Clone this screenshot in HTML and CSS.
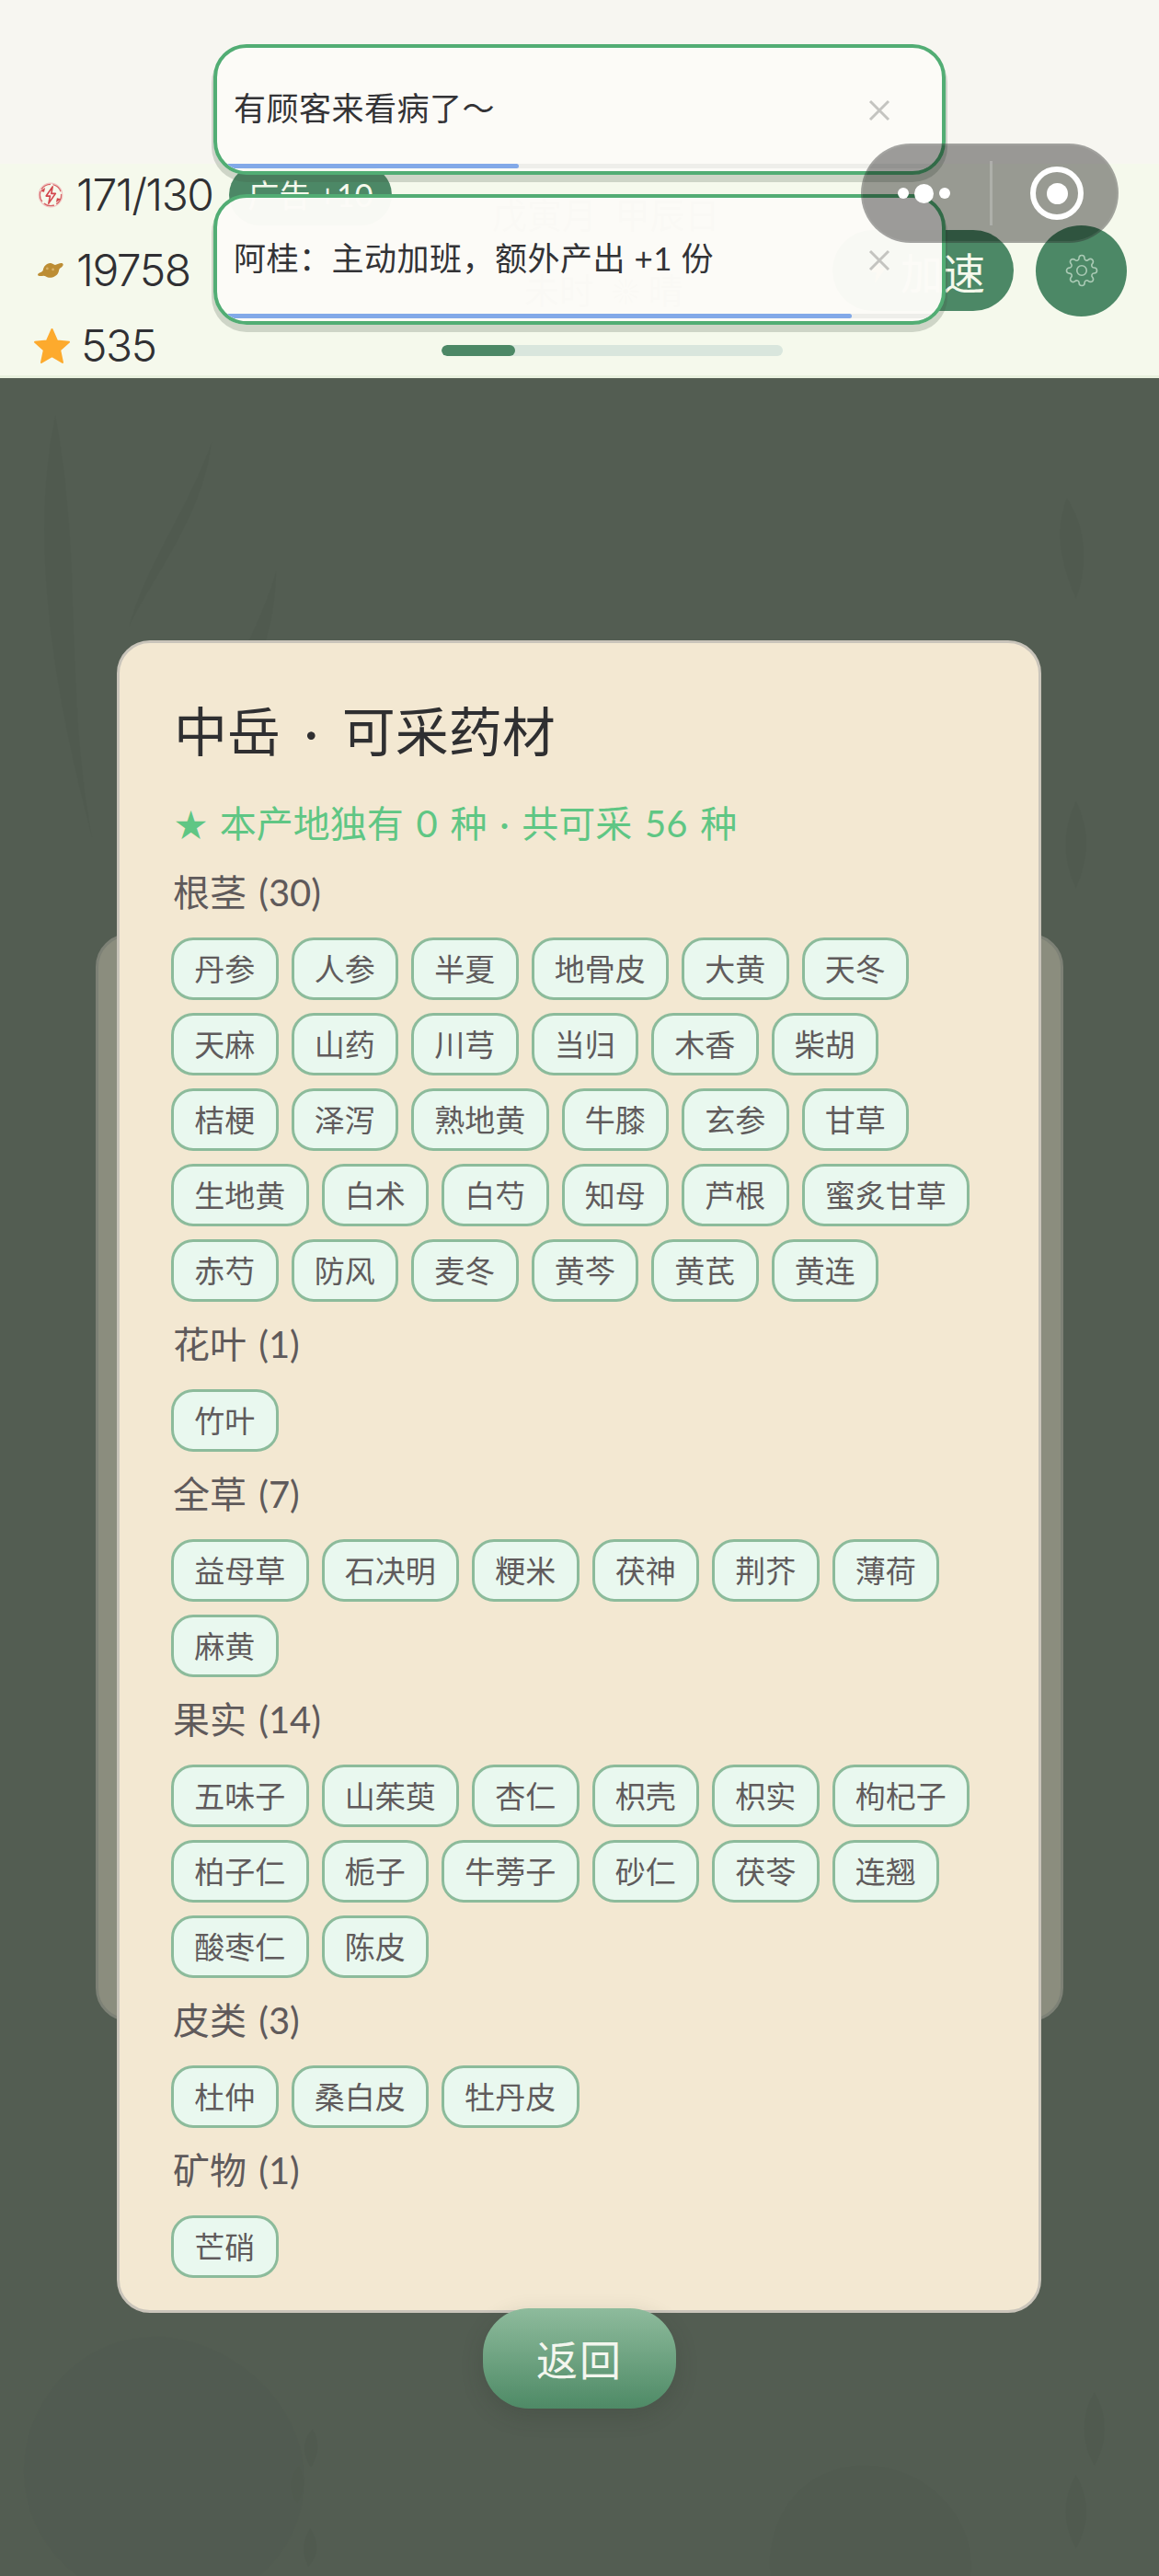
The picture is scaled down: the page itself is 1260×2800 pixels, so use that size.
FILE: index.html
```html
<!DOCTYPE html>
<html lang="zh-CN">
<head>
  <meta charset="UTF-8" />
  <title>中岳 · 可采药材</title>
  <link rel="stylesheet" href="styles.css">
</head>
<body>

  <div class="status-bar"></div>

  <header class="hud">
    <div class="stats">
      <div class="stat">
        <svg class="stat-icon" viewBox="0 0 28 26" fill="none">
          <circle cx="14" cy="13" r="11" stroke="#d9686a" stroke-width="1.6" stroke-dasharray="11 2.5"/>
          <circle cx="14" cy="13" r="12" stroke="#f0c4c2" stroke-width="1"/>
          <path d="M16 4.500 9.500 14h4l-1.500 7.500L19 11.500h-4.200z" fill="#f8ecea" stroke="#d2474c" stroke-width="1.500" stroke-linejoin="round"/>
          <path d="M3.500 9 8.500 5.500 7.500 10zM24.500 17 19.500 20.500 20.500 16z" fill="#d2474c"/>
        </svg>
        <span class="stat-num">171/130</span>
      </div>
      <div class="stat">
        <svg class="stat-icon" viewBox="0 0 29 22">
          <path d="M1 15.500C1.500 13 5 13.500 6.500 11 7 6.500 11 2.500 15.500 3.500c2 .5 3 2 4.500 1.500 2-1 5-2.500 7-1.500 2 1.500-.5 4-2.500 5-1.500 1-1 3-2 5-1.500 3.500-6 5.500-10 5-2.500-.5-3.500-2-5.500-2-2.500.3-6.500.5-6-1.500z" fill="#bc8d34"/>
          <circle cx="11" cy="9" r="1.300" fill="#d8b26a"/>
          <circle cx="17" cy="10" r="1.300" fill="#d8b26a"/>
        </svg>
        <span class="stat-num">19758</span>
      </div>
      <div class="stat">
        <svg class="star-icon" viewBox="0 0 41 40">
          <path d="M20.500 2 26 14.500l13 1.300-9.800 8.800L32 38l-11.500-6.800L9 38l2.800-13.400L2 15.800l13-1.300z" fill="#fdaa2d" stroke="#fdaa2d" stroke-width="2" stroke-linejoin="round"/>
        </svg>
        <span class="stat-num">535</span>
      </div>
    </div>

    <div class="mid">
      <div class="mid-top">
        <div class="ad-pill">广告 +10</div>
        <div class="clock">
          <div class="clock-date">戊寅月&nbsp;&nbsp;甲辰日</div>
          <div class="clock-time">未时&nbsp;&nbsp;☀&nbsp;晴</div>
        </div>
      </div>
      <div class="loader"><div class="loader-fill"></div></div>
    </div>

    <div class="actions">
      <div class="speed-btn">
        <svg class="bolt" viewBox="0 0 20 30"><path d="M12 1 2 17h6l-2 12 12-17h-7z" fill="#f6d36b"/></svg>
        <span>加速</span>
      </div>
      <div class="gear-btn">
        <svg viewBox="0 0 24 24" fill="none" stroke="#a9c9b4" stroke-width="1.100">
          <circle cx="12" cy="12" r="3.500"/>
          <path d="M19.400 15a1.650 1.650 0 0 0 .33 1.820l.06.06a2 2 0 0 1 0 2.830 2 2 0 0 1-2.830 0l-.06-.06a1.650 1.650 0 0 0-1.820-.33 1.650 1.650 0 0 0-1 1.510V21a2 2 0 0 1-2 2 2 2 0 0 1-2-2v-.09A1.650 1.650 0 0 0 9 19.400a1.650 1.650 0 0 0-1.820.33l-.06.06a2 2 0 0 1-2.830 0 2 2 0 0 1 0-2.830l.06-.06a1.650 1.650 0 0 0 .33-1.820 1.650 1.650 0 0 0-1.510-1H3a2 2 0 0 1-2-2 2 2 0 0 1 2-2h.09A1.650 1.650 0 0 0 4.600 9a1.650 1.650 0 0 0-.33-1.820l-.06-.06a2 2 0 0 1 0-2.830 2 2 0 0 1 2.830 0l.06.06a1.650 1.650 0 0 0 1.820.33H9a1.650 1.650 0 0 0 1-1.510V3a2 2 0 0 1 2-2 2 2 0 0 1 2 2v.09a1.650 1.650 0 0 0 1 1.510 1.650 1.650 0 0 0 1.820-.33l.06-.06a2 2 0 0 1 2.830 0 2 2 0 0 1 0 2.830l-.06.06a1.650 1.650 0 0 0-.33 1.820V9a1.650 1.650 0 0 0 1.510 1H21a2 2 0 0 1 2 2 2 2 0 0 1-2 2h-.09a1.650 1.650 0 0 0-1.510 1z"/>
        </svg>
      </div>
    </div>
  </header>

  <!-- 顶部通知 -->
  <div class="toast toast-first">
    <span class="toast-text">有顾客来看病了～</span>
    <svg class="toast-close" viewBox="0 0 24 24"><path d="M2 2 22 22M22 2 2 22" stroke="#c4c4c0" stroke-width="3"/></svg>
    <div class="toast-track"><div class="toast-bar" style="width: 41.6%"></div></div>
  </div>
  <div class="toast toast-second">
    <span class="toast-text">阿桂：主动加班，额外产出 +1 份</span>
    <svg class="toast-close" viewBox="0 0 24 24"><path d="M2 2 22 22M22 2 2 22" stroke="#c4c4c0" stroke-width="3"/></svg>
    <div class="toast-track"><div class="toast-bar" style="width: 87.5%"></div></div>
  </div>

  <!-- 小程序胶囊 -->
  <div class="capsule">
    <div class="capsule-dots"><i></i><i class="big"></i><i></i></div>
    <div class="capsule-line"></div>
    <div class="capsule-target"><i></i></div>
  </div>

  <main class="scene">
    <svg class="scene-art" viewBox="0 0 1260 2390" fill="#3f4a3f">
      <path d="M60 40c30 160 10 300 40 460-40-150-70-320-40-460zM230 70c-30 80-70 130-90 200 30-60 80-120 90-200zM300 210c-20 70-60 120-70 190 40-50 70-120 70-190zM240 300c40 5 80 30 110 60-40-15-80-25-110-60z"/>
      <path d="M1160 130c20 30 25 70 10 110-15-35-25-70-10-110zM1045 330c20 20 25 50 15 80-15-25-25-50-15-80zM1050 430c15 30 15 65-5 95-10-30-10-65 5-95zM1170 460c15 30 15 60 0 95-15-30-15-65 0-95z"/>
      <path d="M180 2130c90 10 160 90 150 170-10 90-100 140-180 120-90-20-140-100-120-180 20-70 80-115 150-110z" opacity=".5"/>
      <path d="M340 2230c8 15 6 30-2 42-10-14-10-30 2-42zM325 2270c8 15 6 30-2 42-10-14-10-30 2-42zM335 2380c-8-15-6-30 2-42 10 14 10 30-2 42z"/>
      <path d="M940 2270c70 0 125 60 115 125-10 70-70 100-130 85-60-15-100-70-85-130 12-50 50-80 100-80z" opacity=".6"/>
      <path d="M720 2620c35-35 70-50 110-70-20 45-60 80-90 100z" opacity=".6"/>
      <path d="M1190 2190c15 25 15 55 0 80-15-25-15-55 0-80zM1170 2280c15 25 15 55 0 80-15-25-15-55 0-80z"/>
    </svg>

    <div class="back-card"></div>

    <section class="sheet">
      <h1 class="sheet-title">中岳 · 可采药材</h1>
      <p class="sheet-sub"><span class="sub-star">★</span> 本产地独有 0 种 · 共可采 56 种</p>

      <h2 class="group-name">根茎 (30)</h2>
      <div class="tags">
        <span class="tag">丹参</span><span class="tag">人参</span><span class="tag">半夏</span><span class="tag">地骨皮</span><span class="tag">大黄</span><span class="tag">天冬</span>
        <span class="tag">天麻</span><span class="tag">山药</span><span class="tag">川芎</span><span class="tag">当归</span><span class="tag">木香</span><span class="tag">柴胡</span>
        <span class="tag">桔梗</span><span class="tag">泽泻</span><span class="tag">熟地黄</span><span class="tag">牛膝</span><span class="tag">玄参</span><span class="tag">甘草</span>
        <span class="tag">生地黄</span><span class="tag">白术</span><span class="tag">白芍</span><span class="tag">知母</span><span class="tag">芦根</span><span class="tag">蜜炙甘草</span>
        <span class="tag">赤芍</span><span class="tag">防风</span><span class="tag">麦冬</span><span class="tag">黄芩</span><span class="tag">黄芪</span><span class="tag">黄连</span>
      </div>

      <h2 class="group-name">花叶 (1)</h2>
      <div class="tags">
        <span class="tag">竹叶</span>
      </div>

      <h2 class="group-name">全草 (7)</h2>
      <div class="tags">
        <span class="tag">益母草</span><span class="tag">石决明</span><span class="tag">粳米</span><span class="tag">茯神</span><span class="tag">荆芥</span><span class="tag">薄荷</span>
        <span class="tag">麻黄</span>
      </div>

      <h2 class="group-name">果实 (14)</h2>
      <div class="tags">
        <span class="tag">五味子</span><span class="tag">山茱萸</span><span class="tag">杏仁</span><span class="tag">枳壳</span><span class="tag">枳实</span><span class="tag">枸杞子</span>
        <span class="tag">柏子仁</span><span class="tag">栀子</span><span class="tag">牛蒡子</span><span class="tag">砂仁</span><span class="tag">茯苓</span><span class="tag">连翘</span>
        <span class="tag">酸枣仁</span><span class="tag">陈皮</span>
      </div>

      <h2 class="group-name">皮类 (3)</h2>
      <div class="tags">
        <span class="tag">杜仲</span><span class="tag">桑白皮</span><span class="tag">牡丹皮</span>
      </div>

      <h2 class="group-name">矿物 (1)</h2>
      <div class="tags">
        <span class="tag">芒硝</span>
      </div>
    </section>

    <button class="back-btn">返回</button>
  </main>

</body>
</html>
```

FILE: styles.css
```css
* {
  box-sizing: border-box;
}

body {
  margin: 0;
  width: 1260px;
  height: 2800px;
  overflow: hidden;
  position: relative;
  background-color: #535d52;
  font-family: "Lato", "Noto Sans CJK SC", sans-serif;
  color: #303033;
}

/* 顶部 */
.status-bar {
  height: 178px;
  background-color: #f7f6f1;
}

.hud {
  display: flex;
  height: 233px;
  background-color: #f5f9ec;
  border-bottom: 3px solid #e9f1df;
}

.stats {
  width: 249px;
  padding: 1px 0 0 36px;
  display: flex;
  flex-direction: column;
  gap: 17px;
}

.stat {
  height: 66px;
  display: flex;
  align-items: center;
}

.stat-icon {
  flex-shrink: 0;
  width: 30px;
  height: 28px;
  margin: 0 13px 0 4px;
}

.star-icon {
  flex-shrink: 0;
  width: 41px;
  height: 40px;
  margin-right: 11px;
}

.stat-num {
  font-family: "Inter", sans-serif;
  font-size: 48px;
  font-weight: 300;
  letter-spacing: -1.5px;
  white-space: nowrap;
}

.mid {
  width: 656px;
  padding-top: 1px;
}

.mid-top {
  display: flex;
}

.ad-pill {
  width: 177px;
  height: 66px;
  border-radius: 33px;
  background-color: #4c8866;
  color: #f5f9ec;
  font-size: 34px;
  line-height: 66px;
  text-align: center;
  white-space: nowrap;
}

.clock {
  margin-left: 109px;
  padding-top: 32px;
  font-size: 38px;
  line-height: 44px;
  color: #8a8a85;
  white-space: nowrap;
}

.clock-time {
  margin: 38px 0 0 35px;
}

.loader {
  width: 371px;
  height: 12px;
  margin: 38px 0 0 231px;
  border-radius: 6px;
  background-color: #d9e6dd;
  overflow: hidden;
}

.loader-fill {
  width: 80px;
  height: 100%;
  border-radius: 6px;
  background-color: #4c8866;
}

.actions {
  display: flex;
  align-items: center;
  gap: 24px;
  height: 98px;
  margin-top: 67px;
}

.speed-btn {
  width: 197px;
  height: 88px;
  border-radius: 44px;
  background-color: #4c8866;
  color: #f5f9ec;
  font-size: 46px;
  display: flex;
  align-items: center;
  padding-left: 40px;
  gap: 14px;
  white-space: nowrap;
}

.bolt {
  width: 20px;
  height: 30px;
}

.gear-btn {
  width: 99px;
  height: 99px;
  border-radius: 50%;
  background-color: #4c8866;
  display: flex;
  align-items: center;
  justify-content: center;
}

.gear-btn svg {
  width: 36px;
  height: 36px;
}

/* 通知 */
.toast {
  position: absolute;
  left: 232px;
  width: 796px;
  height: 142px;
  padding: 0 0 8px 18px;
  display: flex;
  align-items: center;
  background-color: rgba(252, 251, 247, 0.98);
  border: 4px solid #52ad74;
  border-radius: 36px;
  box-shadow: 0 6px 0 2px rgba(70, 85, 70, 0.22);
  overflow: hidden;
  z-index: 5;
}

.toast-first {
  top: 48px;
}

.toast-second {
  top: 211px;
}

.toast-text {
  font-size: 35px;
  letter-spacing: 0.5px;
  color: #333336;
  white-space: nowrap;
}

.toast-close {
  position: absolute;
  right: 56px;
  top: 56px;
  width: 24px;
  height: 24px;
}

.toast-track {
  position: absolute;
  left: 0;
  right: 0;
  bottom: 3px;
  height: 5px;
  background-color: #eeeeea;
}

.toast-bar {
  height: 100%;
  border-radius: 3px;
  background-color: #82a9e8;
}

/* 胶囊 */
.capsule {
  position: absolute;
  left: 936px;
  top: 156px;
  width: 280px;
  height: 108px;
  border-radius: 54px;
  background-color: rgba(0, 0, 0, 0.38);
  border: 2px solid rgba(255, 255, 255, 0.08);
  display: flex;
  align-items: center;
  z-index: 10;
}

.capsule-dots {
  width: 138px;
  display: flex;
  align-items: center;
  justify-content: center;
  gap: 6px;
  padding-right: 6px;
}

.capsule-dots i {
  width: 12px;
  height: 12px;
  border-radius: 50%;
  background-color: #fff;
}

.capsule-dots i.big {
  width: 21px;
  height: 21px;
}

.capsule-line {
  width: 3px;
  height: 70px;
  background-color: rgba(255, 255, 255, 0.22);
}

.capsule-target {
  width: 58px;
  height: 58px;
  margin-left: 41px;
  border: 6px solid #fff;
  border-radius: 50%;
  display: flex;
  align-items: center;
  justify-content: center;
}

.capsule-target i {
  width: 23px;
  height: 23px;
  border-radius: 50%;
  background-color: #fff;
}

/* 主体 */
.scene {
  position: relative;
  height: 2389px;
  padding-top: 285px;
}

.scene-art {
  position: absolute;
  left: 0;
  top: 0;
  width: 1260px;
  height: 2389px;
  opacity: 0.1;
}

.back-card {
  position: absolute;
  left: 104px;
  top: 604px;
  width: 1052px;
  height: 1182px;
  border-radius: 36px;
  background-color: #8b8d7e;
  border: 3px solid #7d8176;
}

.sheet {
  position: relative;
  width: 1005px;
  height: 1818px;
  margin-left: 127px;
  padding: 57px 58px 0;
  background-color: #f3e8d2;
  border: 3px solid #c9c4ba;
  border-radius: 36px;
}

.sheet-title {
  margin: 0 0 0 1px;
  font-size: 58px;
  line-height: 78px;
  font-weight: 400;
  word-spacing: 11px;
  color: #2f2f31;
  white-space: nowrap;
}

.sheet-sub {
  margin: 0 0 7px 2px;
  padding-top: 33px;
  font-size: 40px;
  line-height: 56px;
  word-spacing: 3.5px;
  color: #5fc684;
  white-space: nowrap;
}

.sub-star {
  font-size: 35px;
}

.group-name {
  margin: 18px 0 21px;
  font-size: 40px;
  line-height: 56px;
  font-weight: 400;
  word-spacing: 3px;
  color: #5f5a5b;
}

.tags {
  display: flex;
  flex-wrap: wrap;
  gap: 14px;
  width: 885px;
  margin-left: -2px;
}

.tag {
  height: 68px;
  padding: 0 22.25px;
  font-size: 33px;
  line-height: 62px;
  color: #605b5c;
  background-color: #e9f8ef;
  border: 3px solid #8cbb9b;
  border-radius: 24px;
  white-space: nowrap;
}

.back-btn {
  position: relative;
  display: block;
  width: 210px;
  height: 109px;
  margin: -5px 0 0 525px;
  border: none;
  border-radius: 50px;
  background: linear-gradient(180deg, #8ebb9c, #4e8a66);
  box-shadow: 0 8px 24px rgba(40, 50, 40, 0.2);
  color: #f3f6ee;
  font-family: "Noto Sans CJK SC", sans-serif;
  font-size: 45px;
  letter-spacing: 2px;
}
```
